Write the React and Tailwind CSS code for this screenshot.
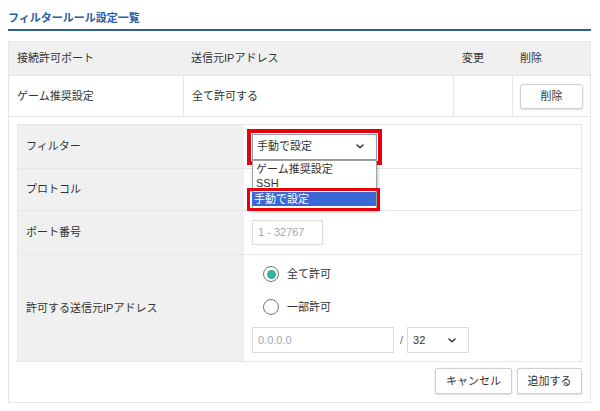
import React from "react";

const font = { fontFamily: '"Liberation Sans", "Noto Sans CJK JP", "Noto Sans", sans-serif' };

function Chevron({ className }) {
  return (
    <svg className={className} width="8" height="5" viewBox="0 0 8 5" fill="none">
      <path d="M1 1 L4 3.8 L7 1" stroke="#333" strokeWidth="1.5" strokeLinecap="round" strokeLinejoin="round" />
    </svg>
  );
}

function Radio({ checked }) {
  return (
    <span className="flex h-[16px] w-[16px] items-center justify-center rounded-full border border-[#777] bg-white">
      {checked && <span className="h-[9px] w-[9px] rounded-full bg-[#2fb39b]" />}
    </span>
  );
}

export default function App() {
  return (
    <div className="h-[411px] w-[600px] overflow-hidden bg-white pl-[8px] pr-[9px] text-[11px] text-[#333]" style={font}>
      <div className="pt-[9px] text-[11px] font-bold leading-[18px] text-[#2a5ca3]">フィルタールール設定一覧</div>
      <div className="mt-[2px] h-[2px] bg-[#2f5e9c]" />
      <div className="mt-[10px] border border-[#e6e6e6]">
        <div className="flex h-[33px] items-center bg-[#f0f0f0]">
          <div className="w-[174px] pl-[8px]">接続許可ポート</div>
          <div className="w-[270px] pl-[8px]">送信元IPアドレス</div>
          <div className="w-[59px] pl-[9px]">変更</div>
          <div className="pl-[8px]">削除</div>
        </div>
        <div className="flex h-[41px] items-stretch border-t border-[#e6e6e6]">
          <div className="flex w-[174px] items-center pl-[8px]">ゲーム推奨設定</div>
          <div className="flex w-[270px] items-center border-l border-[#e6e6e6] pl-[8px]">全て許可する</div>
          <div className="w-[59px] border-l border-[#e6e6e6]" />
          <div className="flex flex-1 items-center border-l border-[#e6e6e6] pl-[7px]">
            <button className="h-[25px] w-[63px] rounded-[3px] border border-[#cfcfcf] bg-white text-[11px] text-[#333] shadow-[0_1px_2px_rgba(0,0,0,0.15)]">削除</button>
          </div>
        </div>
        <div className="border-t border-[#e6e6e6] px-[8px] pb-[8px] pt-[7px]">
          <div className="border border-[#e6e6e6]">
            <div className="relative flex h-[43px]">
              <div className="flex w-[226px] items-center bg-[#f0f0f0] pl-[8px]">フィルター</div>
              <div className="flex flex-1 items-center pl-[3px]">
                <div className="border-[4px] border-[#e8000b] p-[1px]">
                  <div className="flex h-[26px] w-[125px] items-center justify-between border border-[#8aa0c0] bg-white pl-[4px] pr-[12px]">
                    <span>手動で設定</span>
                    <Chevron />
                  </div>
                </div>
              </div>
              <div className="absolute left-[234px] top-[35px] z-10 h-[50px] w-[125px] border border-[#a0a0a0] bg-white pt-[1px] leading-[14px] shadow-[1px_2px_3px_rgba(0,0,0,0.25)]">
                <div className="pl-[3px]">ゲーム推奨設定</div>
                <div className="pl-[3px]">SSH</div>
              </div>
              <div className="absolute left-[229px] top-[63px] z-20 h-[23px] w-[133px] border-[3px] border-[#e8000b] p-0">
                <div className="ml-[2px] mt-[1px] flex h-[14px] w-[124px] items-center bg-[#3a68d6] pl-[2px] leading-[14px] text-white">手動で設定</div>
              </div>
            </div>
            <div className="flex h-[42px] border-t border-[#e6e6e6]">
              <div className="flex w-[226px] items-center bg-[#f0f0f0] pl-[8px]">プロトコル</div>
              <div className="flex-1" />
            </div>
            <div className="flex h-[44px] border-t border-[#e6e6e6]">
              <div className="flex w-[226px] items-center bg-[#f0f0f0] pl-[8px]">ポート番号</div>
              <div className="flex flex-1 items-center pl-[8px]">
                <div className="flex h-[25px] w-[71px] items-center border border-[#dcdcdc] pl-[5px] text-[#a0a8b0]">1 - 32767</div>
              </div>
            </div>
            <div className="flex h-[107px] border-t border-[#e6e6e6]">
              <div className="flex w-[226px] items-center bg-[#f0f0f0] pl-[8px]">許可する送信元IPアドレス</div>
              <div className="flex flex-1 flex-col pl-[8px] pt-[11px]">
                <div className="flex items-center gap-[8px] pl-[11px]">
                  <Radio checked />
                  <span>全て許可</span>
                </div>
                <div className="mt-[16px] flex items-center gap-[8px] pl-[11px]">
                  <Radio />
                  <span>一部許可</span>
                </div>
                <div className="mt-[12px] flex items-center">
                  <div className="flex h-[26px] w-[142px] items-center border border-[#dcdcdc] pl-[5px] text-[#a0a8b0]">0.0.0.0</div>
                  <span className="ml-[6px] mr-[4px] text-[#666]">/</span>
                  <div className="flex h-[26px] w-[62px] items-center justify-between border border-[#dcdcdc] pl-[5px] pr-[12px]">
                    <span>32</span>
                    <Chevron />
                  </div>
                </div>
              </div>
            </div>
          </div>
          <div className="mt-[6px] flex justify-end gap-[5px]">
            <button className="h-[26px] w-[77px] rounded-[2px] border border-[#cfcfcf] bg-white text-[11px] text-[#333] shadow-[0_1px_2px_rgba(0,0,0,0.15)]">キャンセル</button>
            <button className="h-[26px] w-[65px] rounded-[2px] border border-[#cfcfcf] bg-white text-[11px] text-[#333] shadow-[0_1px_2px_rgba(0,0,0,0.15)]">追加する</button>
          </div>
        </div>
      </div>
    </div>
  );
}
